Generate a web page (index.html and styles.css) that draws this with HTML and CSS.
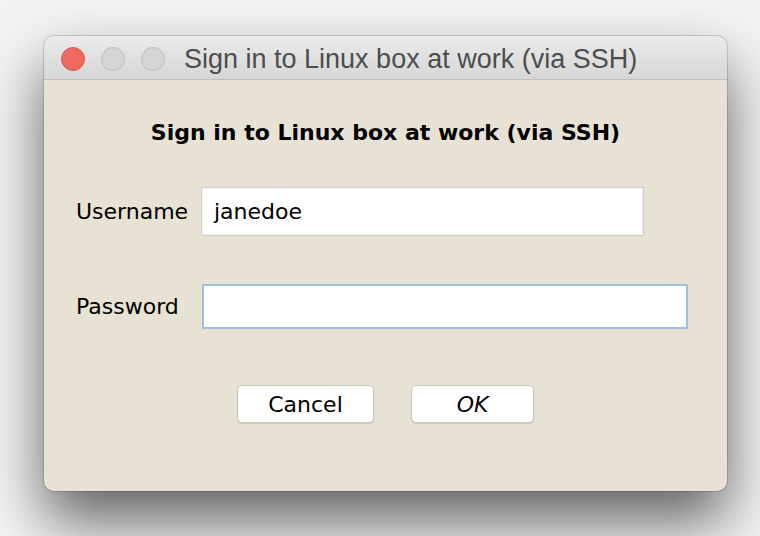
FILE: index.html
```html
<!DOCTYPE html>
<html>
<head>
<meta charset="utf-8">
<link rel="stylesheet" href="styles.css">
</head>
<body>
<div class="desk">
  <div class="window">
    <div class="titlebar">
      <div class="lights">
        <span class="light close"></span>
        <span class="light"></span>
        <span class="light"></span>
      </div>
      <div class="title">Sign in to Linux box at work (via SSH)</div>
    </div>
    <div class="content">
      <h1 class="heading">Sign in to Linux box at work (via SSH)</h1>
      <div class="row row-user">
        <label class="label">Username</label>
        <div class="field field-user">janedoe</div>
      </div>
      <div class="row row-pass">
        <label class="label">Password</label>
        <div class="field field-pass"></div>
      </div>
      <div class="buttons">
        <button class="btn btn-cancel">Cancel</button>
        <button class="btn btn-ok">OK</button>
      </div>
    </div>
  </div>
</div>
</body>
</html>
```
FILE: styles.css
```css
html, body {
  margin: 0;
  padding: 0;
}
body {
  width: 760px;
  height: 536px;
  background: #f3f3f3;
  overflow: hidden;
}
.desk {
  padding: 36px 0 0 44px;
}
.window {
  width: 683px;
  height: 455px;
  border-radius: 10px;
  overflow: hidden;
  background: #e8e2d4;
  box-shadow: 0 0 0 1px rgba(0,0,0,0.14), 0 30px 60px rgba(0,0,0,0.6);
  display: flex;
  flex-direction: column;
}
.titlebar {
  height: 43px;
  flex: none;
  background: linear-gradient(#ebebeb, #d6d6d6);
  border-bottom: 1px solid #c0c0c0;
  display: flex;
  align-items: center;
}
.lights {
  display: flex;
  gap: 16px;
  padding-left: 17px;
  padding-top: 2px;
}
.light {
  width: 24px;
  height: 24px;
  border-radius: 50%;
  box-sizing: border-box;
  background: #d5d5d5;
  border: 1px solid #bdbdbd;
}
.light.close {
  background: #ee6a5e;
  border-color: #d65a4f;
}
.title {
  margin-left: 19px;
  padding-top: 3px;
  font-family: "Liberation Sans", Arial, sans-serif;
  font-size: 27px;
  color: #4d4d4d;
  white-space: nowrap;
}
.content {
  flex: 1;
  font-family: "DejaVu Sans", "Liberation Sans", sans-serif;
  color: #000;
  padding: 0 0 0 32px;
}
.heading {
  margin: 40px 32px 0 0;
  font-size: 22px;
  font-weight: bold;
  text-align: center;
  line-height: 26px;
}
.row {
  display: flex;
  align-items: center;
}
.row-user {
  margin-top: 41px;
}
.row-pass {
  margin-top: 48px;
}
.label {
  font-size: 22px;
  width: 125px;
  flex: none;
}
.field {
  background: #fff;
  box-sizing: border-box;
  font-size: 22px;
  padding-left: 12px;
  display: flex;
  align-items: center;
}
.field-user {
  width: 443px;
  height: 49px;
  border: 1px solid #cfcfcf;
  box-shadow: inset 0 0 0 1px #f4f4f4;
}
.field-pass {
  width: 486px;
  height: 45px;
  margin-left: 1px;
  border: 2px solid #9fbfdc;
}
.buttons {
  display: flex;
  justify-content: center;
  gap: 37px;
  margin: 56px 32px 0 0;
}
.btn {
  font-family: "DejaVu Sans", "Liberation Sans", sans-serif;
  font-size: 22px;
  color: #000;
  background: #fff;
  border: 1px solid #c8c4bc;
  border-radius: 5px;
  height: 38px;
  box-shadow: 0 1px 1px rgba(0,0,0,0.12);
  padding: 0;
}
.btn-cancel {
  width: 137px;
}
.btn-ok {
  width: 123px;
  font-style: italic;
}
```
